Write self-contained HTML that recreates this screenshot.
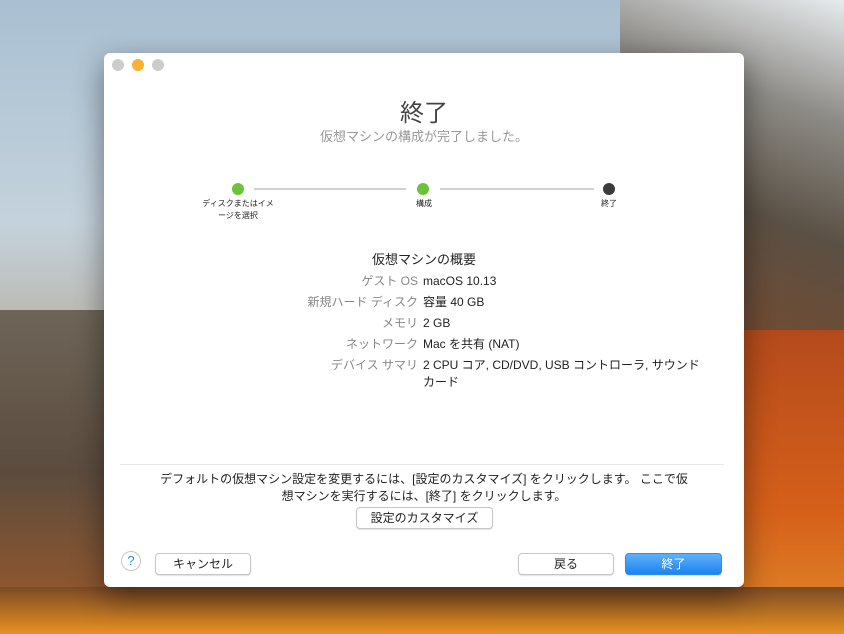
<!DOCTYPE html>
<html><head><meta charset="utf-8"><style>
*{margin:0;padding:0;box-sizing:border-box}
body{width:844px;height:634px;overflow:hidden;position:relative;font-family:"Liberation Sans","Noto Sans CJK JP",sans-serif;
background:linear-gradient(180deg,#a9c0d2 0%,#c4d2dc 35%,#b9b2a6 55%,#8b6a4c 72%,#b0501e 85%,#d5751c 100%);}
.a{position:absolute}
.win{position:absolute;left:104px;top:53px;width:640px;height:534px;background:#fff;border-radius:6px;box-shadow:0 10px 30px rgba(0,0,0,.45)}
.dot{position:absolute;width:12px;height:12px;border-radius:50%}
.t{position:absolute;white-space:nowrap;color:#222}
.btn{position:absolute;height:22px;border:1px solid #c6c6c6;border-radius:4px;background:#fff;font-size:12px;text-align:center;line-height:20px;color:#222;box-shadow:0 1px 1px rgba(0,0,0,.12)}
.lab{position:absolute;right:326px;font-size:12px;line-height:16px;color:#888;white-space:nowrap}
.val{position:absolute;left:319px;font-size:12px;line-height:16px;color:#222;white-space:nowrap}
</style></head><body>
<div class="a" style="left:620px;top:0;width:224px;height:330px;background:linear-gradient(200deg,#e8ecef 0%,#8d8b86 30%,#5a5044 60%,#7a4a2c 100%)"></div>
<div class="a" style="left:0;top:310px;width:110px;height:324px;background:linear-gradient(180deg,#6e6558 0%,#5b4c3e 50%,#a05a2a 100%)"></div>
<div class="a" style="left:744px;top:330px;width:100px;height:304px;background:linear-gradient(180deg,#b44a1c,#d6601a 60%,#e08a2a)"></div>
<div class="a" style="left:0;top:587px;width:844px;height:47px;background:linear-gradient(180deg,#7a4a25,#e8911f)"></div>
<div class="win">
<div class="dot" style="left:8px;top:6px;background:#cdcdcd"></div>
<div class="dot" style="left:28px;top:6px;background:#f5b233"></div>
<div class="dot" style="left:48px;top:6px;background:#cdcdcd"></div>
<div class="t" style="left:0;width:640px;text-align:center;top:40px;font-size:24px;color:#444">終了</div>
<div class="t" style="left:0;width:640px;text-align:center;top:73px;font-size:13px;color:#999">仮想マシンの構成が完了しました。</div>
<div class="a" style="left:150px;top:135px;width:152px;height:2px;background:#d0d0d0"></div>
<div class="a" style="left:336px;top:135px;width:154px;height:2px;background:#d0d0d0"></div>
<div class="dot" style="left:128px;top:130px;background:#6cc33a"></div>
<div class="dot" style="left:313px;top:130px;background:#6cc33a"></div>
<div class="dot" style="left:499px;top:130px;background:#3c3c3c"></div>
<div class="t" style="left:84px;width:100px;text-align:center;top:145px;font-size:8px;line-height:12px">ディスクまたはイメ<br>ージを選択</div>
<div class="t" style="left:300px;width:40px;text-align:center;top:145px;font-size:8px">構成</div>
<div class="t" style="left:485px;width:40px;text-align:center;top:145px;font-size:8px">終了</div>
<div class="t" style="left:0;width:640px;text-align:center;top:196px;font-size:13px;color:#222">仮想マシンの概要</div>
<div class="lab" style="top:220px">ゲスト OS</div><div class="val" style="top:220px">macOS 10.13</div>
<div class="lab" style="top:241px">新規ハード ディスク</div><div class="val" style="top:241px">容量 40 GB</div>
<div class="lab" style="top:262px">メモリ</div><div class="val" style="top:262px">2 GB</div>
<div class="lab" style="top:283px">ネットワーク</div><div class="val" style="top:283px">Mac を共有 (NAT)</div>
<div class="lab" style="top:304px">デバイス サマリ</div><div class="val" style="top:304px;line-height:17px">2 CPU コア, CD/DVD, USB コントローラ, サウンド<br>カード</div>
<div class="a" style="left:16px;top:411px;width:604px;height:1px;background:#e8e8e8"></div>
<div class="t" style="left:0;width:640px;text-align:center;top:418px;font-size:12px;line-height:17px">デフォルトの仮想マシン設定を変更するには、[設定のカスタマイズ] をクリックします。 ここで仮<br>想マシンを実行するには、[終了] をクリックします。</div>
<div class="btn" style="left:252px;top:454px;width:137px">設定のカスタマイズ</div>
<div class="a" style="left:17px;top:498px;width:20px;height:20px;border-radius:50%;border:1px solid #c6c6c6;color:#2a8cf0;font-size:13px;text-align:center;line-height:18px">?</div>
<div class="btn" style="left:51px;top:500px;width:96px">キャンセル</div>
<div class="btn" style="left:414px;top:500px;width:96px">戻る</div>
<div class="btn" style="left:521px;top:500px;width:97px;border-color:#2b8ef0;background:linear-gradient(#5db1fb,#1c83f0);color:#fff">終了</div>
</div>
</body></html>
